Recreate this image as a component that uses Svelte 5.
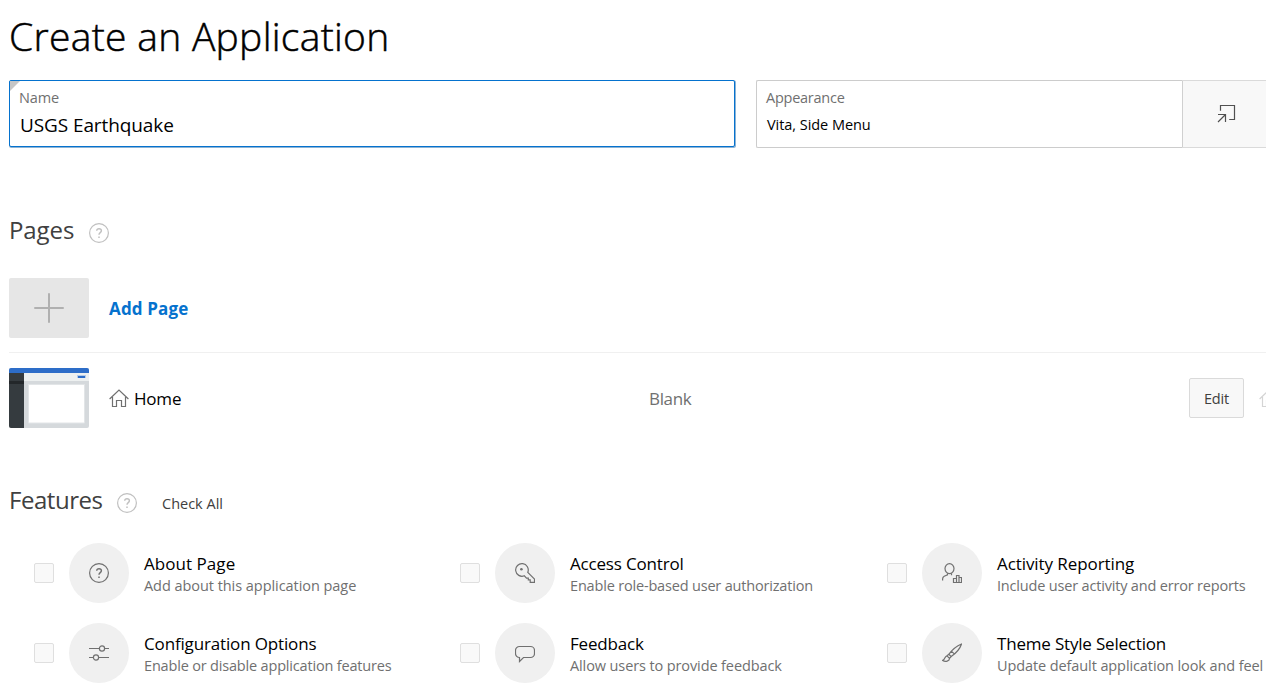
<script>
  const features = [
    { icon: 'help', title: 'About Page', text: 'Add about this application page', ls: [0.05, -0.05] },
    { icon: 'key', title: 'Access Control', text: 'Enable role-based user authorization', ls: [-0.18, -0.18] },
    { icon: 'report', title: 'Activity Reporting', text: 'Include user activity and error reports', ls: [-0.08, -0.18] },
    { icon: 'sliders', title: 'Configuration Options', text: 'Enable or disable application features', ls: [-0.15, -0.18] },
    { icon: 'comment', title: 'Feedback', text: 'Allow users to provide feedback', ls: [-0.19, -0.11] },
    { icon: 'brush', title: 'Theme Style Selection', text: 'Update default application look and feel', ls: [-0.19, -0.1] }
  ];
</script>

{#snippet helpIcon()}
  <svg class="icon" width="20" height="20" viewBox="0 0 20 20">
    <circle cx="10" cy="10" r="9.4" />
    <path d="M7.7 7.8C7.8 6.5 8.6 5.8 10 5.8s2.4.8 2.4 2c0 1.800-2.400 1.900-2.400 4" stroke-width="1.4" />
    <path d="M10 13.400v1.600" stroke-width="1.5" />
  </svg>
{/snippet}

{#snippet homeIcon()}
  <svg class="icon" width="20" height="20" viewBox="0 0 20 20">
    <path d="M.6 11 10 2l9.400 9M3.500 9v9.500h4V12.500h5v6h4V9" />
  </svg>
{/snippet}

<main>
  <h1>Create an Application</h1>

  <div class="fields">
    <div class="field name">
      <span class="corner"></span>
      <span class="label">Name</span>
      <span class="value large">USGS Earthquake</span>
    </div>
    <div class="appearance">
      <div class="field">
        <span class="label app">Appearance</span>
        <span class="value">Vita, Side Menu</span>
      </div>
      <div class="pick">
        <svg class="icon" width="20" height="20" viewBox="0 0 20 20">
          <path d="M3.500 6.800V1.500h14v14h-5.300M1 10.500h7.500V18M8.500 10.500 1 18" />
        </svg>
      </div>
    </div>
  </div>

  <div class="heading pages">
    <h2>Pages</h2>
    {@render helpIcon()}
  </div>

  <div class="row add">
    <div class="thumb plus"><svg width="30" height="30" viewBox="0 0 30 30"><path d="M15 1v28M1 15h28" /></svg></div>
    <span class="add-text">Add Page</span>
  </div>

  <div class="row home">
    <svg class="thumb" width="80" height="60" viewBox="0 0 80 60">
      <path fill="#d5d9dc" d="M0 0h80v60H0z" />
      <path fill="#edf0f0" d="M15 5h65v8H15z" />
      <path fill="#353b3f" d="M0 5h15v55H0z" />
      <path fill="#23272a" d="M0 13h15v3H0z" />
      <path fill="#2d6dc8" d="M0 0h80v5H0z" />
      <path fill="#b5cbe9" d="M68 7h9v3h-9z" />
      <path fill="#2d6dc8" d="M69 8h7v2h-7z" />
      <path fill="#fff" stroke="#e2e5e7" d="M19.500 16.500h56v38.500h-56z" />
    </svg>
    <div class="page-name">{@render homeIcon()}<span>Home</span></div>
    <span class="type">Blank</span>
    <button>Edit</button>
    <div class="ghost">{@render homeIcon()}</div>
  </div>

  <div class="heading features-head">
    <h2 class="f">Features</h2>
    {@render helpIcon()}
    <span class="check-all">Check All</span>
  </div>

  <div class="features">
    {#each features as f}
      <div class="feature">
        <span class="box"></span>
        <div class="disc">
          {#if f.icon === 'help'}
            {@render helpIcon()}
          {:else}
            <svg class="icon" width="20" height="20" viewBox="0 0 20 20">
              {#if f.icon === 'key'}
                <path d="M12.800 9.300a6.300 6.300 0 1 0-3.500 3.500l2.200 2.300h1.800v1.800h1.900v2.500h4.300v-3.300z" />
                <circle class="dot" cx="6.400" cy="6.300" r="1.300" />
              {:else if f.icon === 'report'}
                <ellipse cx="7.500" cy="5.600" rx="4.500" ry="5" />
                <path d="M5.500 10.200v1.600l-3.300 1.400C1 13.800.6 14.500.6 16v1.500M9.500 10.200v2.100M11.500 19.500v-4h3v-3h2.500v2h2.500v5zM14.500 15.500v4M17 14.500v5" />
              {:else if f.icon === 'sliders'}
                <path d="M0 5.500h10.300M15.700 5.500H20M0 14.500h4.300M9.700 14.500H20" />
                <circle cx="13" cy="5.500" r="2.600" /><circle cx="7" cy="14.500" r="2.600" />
              {:else if f.icon === 'comment'}
                <path d="M4.500 3.500h11a4 4 0 0 1 4 4v3a4 4 0 0 1-4 4H8.500L4.500 18.500v-4a4 4 0 0 1-4-4v-3a4 4 0 0 1 4-4z" />
              {:else}
                <path d="M6.800 11.300C10 7 14.500 3 19.500 1 18 5.800 13.500 10.500 9.200 13.600L6.800 11.300zM9.600 8.400l2.700 2.500M6.800 11.300 5 12.800l2.500 2.500 1.700-1.700M5 12.800c-2.300.2-1.700 3.700-4.300 4.600 2.600 1.700 7 .9 6.800-2.100" />
              {/if}
            </svg>
          {/if}
        </div>
        <div class="copy">
          <span class="title" style:letter-spacing="{f.ls[0]}px">{f.title}</span>
          <span class="desc" style:letter-spacing="{f.ls[1]}px">{f.text}</span>
        </div>
      </div>
    {/each}
  </div>
</main>

<style>
  :global(body) { margin: 0; background: #fff; overflow: hidden; }
  main {
    box-sizing: border-box;
    width: 1266px;
    height: 693px;
    overflow: hidden;
    padding-left: 9px;
    font-family: "Open Sans", "Noto Sans", sans-serif;
    font-size: 14.500px;
    font-weight: 400;
    color: #000;
    white-space: nowrap;
  }
  .icon { fill: none; stroke: #707070; stroke-width: 1.2; flex: none; display: block; }
  .icon .dot { fill: #707070; stroke: none; }
  h1 { margin: 0; height: 80px; line-height: 72px; font-size: 39px; font-weight: 300; letter-spacing: 0.3px; -webkit-text-stroke: 0.5px #000; }
  .fields { display: flex; gap: 21px; align-items: flex-start; }
  .field { box-sizing: border-box; flex: none; display: flex; flex-direction: column; border: 1px solid #ccc; border-radius: 2px; padding: 6px 9px; background: #fff; }
  .field.name { position: relative; width: 726px; height: 67px; border-color: #0572ce; box-shadow: 0.500px 0.500px 0 0.500px #8db4d6; clip-path: inset(0 -1px -1px 0); }
  .corner { position: absolute; left: 0; top: 0; border-top: 10px solid #c6c6c6; border-right: 10px solid transparent; }
  .label { color: #707070; line-height: 22px; letter-spacing: -0.15px; }
  .label.app { letter-spacing: -0.25px; }
  .value { line-height: 30px; margin-left: 1px; margin-top: 1px; letter-spacing: -0.05px; }
  .value.large { font-size: 19px; letter-spacing: -0.1px; }
  .appearance { display: flex; flex: none; }
  .appearance .field { width: 427px; height: 68px; border-right: 1px solid #d0d0d0; border-radius: 2px 0 0 2px; }
  .pick { box-sizing: border-box; width: 90px; height: 68px; background: #f8f8f8; border: solid #dadada; border-width: 1px 0; padding: 23px 0 0 34px; }
  .pick .icon { stroke: #505050; }
  .heading { display: flex; align-items: center; height: 30px; }
  .heading .icon { stroke: #c0c0c0; margin-left: 15px; margin-top: 5px; }
  h2 { margin: 0; width: 65px; font-size: 24px; line-height: 30px; font-weight: 400; color: #404040; letter-spacing: -0.1px; }
  h2.f { width: 93px; letter-spacing: -0.450px; }
  .pages { margin-top: 67px; }
  .row { display: flex; align-items: center; }
  .thumb { flex: none; width: 80px; height: 60px; border-radius: 2px; }
  .add { padding: 33px 0 14px; border-bottom: 1px solid #f0f0f0; }
  .plus { display: grid; place-items: center; background: #e6e6e6; }
  .plus svg { fill: none; stroke: #b0b0b0; stroke-width: 2; stroke-linecap: round; }
  .add-text { margin-left: 20px; font-size: 17px; font-weight: 700; color: #0572ce; letter-spacing: 0.15px; }
  .home { padding-top: 15px; }
  .page-name { display: flex; flex: none; gap: 5px; align-items: center; width: 540px; margin-left: 20px; font-size: 17px; letter-spacing: -0.2px; }
  .type { width: 540px; flex: none; font-size: 17px; color: #707070; letter-spacing: -0.350px; }
  button { box-sizing: border-box; flex: none; width: 55px; height: 40px; padding: 0; border: 1px solid #dadada; border-radius: 2px; background: #f8f8f8; font: inherit; letter-spacing: -0.2px; color: #404040; }
  .ghost { margin-left: 15px; }
  .ghost .icon { stroke: #d4d4d4; }
  .features-head { margin-top: 57px; }
  .check-all { margin: 6px 0 0 25px; color: #404040; }
  .features { display: grid; grid-template-columns: 426px 427px 426px; row-gap: 20px; padding: 28px 0 0 25px; }
  .feature { display: flex; align-items: center; height: 60px; }
  .box { box-sizing: border-box; width: 20px; height: 20px; border: 1px solid #dfdfdf; border-radius: 2px; background: #f9f9f9; }
  .disc { display: grid; place-items: center; width: 60px; height: 60px; margin: 0 15px; border-radius: 50%; background: #f0f0f0; }
  .copy { display: flex; flex-direction: column; padding-top: 2px; }
  .title { font-size: 17px; line-height: 24px; }
  .desc { line-height: 20px; color: #707070; }
</style>
